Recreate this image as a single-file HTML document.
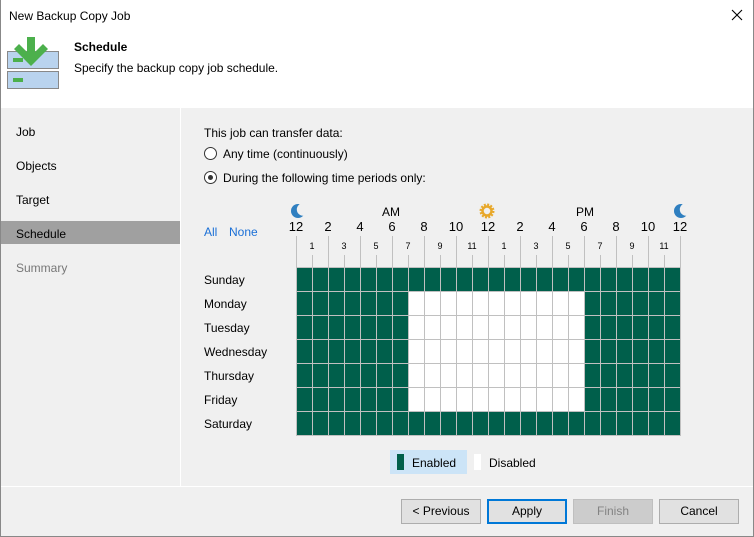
<!DOCTYPE html>
<html><head><style>
*{margin:0;padding:0;box-sizing:border-box}
body{width:754px;height:537px;position:relative;background:#f0f0f0;font-family:"Segoe UI","Liberation Sans",sans-serif;font-size:12px;color:#000;overflow:hidden}
.a{position:absolute;white-space:nowrap}
#win{position:absolute;left:0;top:0;width:754px;height:537px;border:1px solid #888;border-top:none}
.btn{position:absolute;top:499px;height:25px;width:80px;background:#e1e1e1;border:1px solid #adadad;text-align:center;line-height:23px;font-size:12px}
.rad{position:absolute;width:13px;height:13px;border:1px solid #333;border-radius:50%;background:#fff}
</style></head><body>
<div class="a" style="left:0;top:0;width:754px;height:108px;background:#fff"></div>
<div class="a" style="left:9px;top:9px;font-size:12px">New Backup Copy Job</div>
<svg class="a" style="left:731px;top:9px" width="12" height="12"><path d="M1 1L11 11M11 1L1 11" stroke="#000" stroke-width="1.1"/></svg>
<svg class="a" style="left:6px;top:35px" width="54" height="55">
<rect x="1.5" y="16.5" width="51" height="17" fill="#b9d3ee" stroke="#888"/>
<rect x="1.5" y="36.5" width="51" height="17" fill="#b9d3ee" stroke="#888"/>
<rect x="7" y="23" width="10" height="4" fill="#4cb04c"/>
<rect x="7" y="43" width="10" height="4" fill="#4cb04c"/>
<path d="M21 2h8v15l8-8 5 5-17 17-17-17 5-5 8 8z" fill="#4cb04c"/>
</svg>
<div class="a" style="left:74px;top:40px;font-weight:bold">Schedule</div>
<div class="a" style="left:74px;top:61px">Specify the backup copy job schedule.</div>
<div class="a" style="left:180px;top:108px;width:1px;height:378px;background:#fff"></div>
<div class="a" style="left:16px;top:125px">Job</div>
<div class="a" style="left:16px;top:159px">Objects</div>
<div class="a" style="left:16px;top:193px">Target</div>
<div class="a" style="left:1px;top:221px;width:179px;height:23px;background:#a0a0a0"></div>
<div class="a" style="left:16px;top:227px">Schedule</div>
<div class="a" style="left:16px;top:261px;color:#777">Summary</div>
<div class="a" style="left:204px;top:126px">This job can transfer data:</div>
<div class="rad" style="left:204px;top:147px"></div>
<div class="a" style="left:223px;top:147px">Any time (continuously)</div>
<div class="rad" style="left:204px;top:171px"></div>
<div class="a" style="left:208px;top:175px;width:5px;height:5px;border-radius:50%;background:#333"></div>
<div class="a" style="left:223px;top:171px">During the following time periods only:</div>
<div class="a" style="left:204px;top:225px;color:#1a6fd6">All</div>
<div class="a" style="left:229px;top:225px;color:#1a6fd6">None</div>
<div class="a" style="left:382px;top:205px">AM</div>
<div class="a" style="left:576px;top:205px">PM</div>
<svg class="a" style="left:290px;top:203px" width="400" height="16">
<circle cx="8" cy="8" r="7" fill="#2f7fc0"/><circle cx="13" cy="6.5" r="6.2" fill="#f0f0f0"/>
<circle cx="391" cy="8" r="7" fill="#2f7fc0"/><circle cx="396" cy="6.5" r="6.2" fill="#f0f0f0"/>
<circle cx="197" cy="8" r="4.5" fill="none" stroke="#e8a82a" stroke-width="2.5"/>
<circle cx="197" cy="8" r="6.5" fill="none" stroke="#e8a82a" stroke-width="2" stroke-dasharray="2 1.4"/>
</svg>
<div id="hdr"></div>
<div id="grid" class="a" style="left:296px;top:267px;width:385px;height:169px;background:#c0c0c0"></div>
<div class="a" style="left:204px;top:273px">Sunday</div>
<div class="a" style="left:204px;top:297px">Monday</div>
<div class="a" style="left:204px;top:321px">Tuesday</div>
<div class="a" style="left:204px;top:345px">Wednesday</div>
<div class="a" style="left:204px;top:369px">Thursday</div>
<div class="a" style="left:204px;top:393px">Friday</div>
<div class="a" style="left:204px;top:417px">Saturday</div>
<div class="a" style="left:390px;top:450px;width:77px;height:24px;background:#cce4f7"></div>
<div class="a" style="left:397px;top:454px;width:7px;height:16px;background:#005f4b"></div>
<div class="a" style="left:412px;top:456px">Enabled</div>
<div class="a" style="left:474px;top:454px;width:7px;height:16px;background:#fff"></div>
<div class="a" style="left:489px;top:456px">Disabled</div>
<div class="a" style="left:0;top:486px;width:754px;height:1px;background:#fff"></div>
<div class="btn" style="left:401px">&lt; Previous</div>
<div class="btn" style="left:487px;border:2px solid #0078d7;line-height:21px">Apply</div>
<div class="btn" style="left:573px;background:#ccc;border-color:#bfbfbf;color:#838383">Finish</div>
<div class="btn" style="left:659px">Cancel</div>
<div id="win"></div>
<script>
var h='',labs=['12','2','4','6','8','10','12','2','4','6','8','10','12'];
for(var k=0;k<=24;k++){var x=296+16*k;
 if(k%2==0){h+='<div class="a" style="left:'+(x-12)+'px;top:219px;width:24px;text-align:center;font-size:13px">'+labs[k/2]+'</div><div class="a" style="left:'+x+'px;top:236px;width:1px;height:31px;background:#c0c0c0"></div>';}
 else{var n=k>12?k-12:k;h+='<div class="a" style="left:'+(x-10)+'px;top:241px;width:20px;text-align:center;font-size:9px">'+n+'</div><div class="a" style="left:'+x+'px;top:255px;width:1px;height:12px;background:#c0c0c0"></div>';}}
document.getElementById('hdr').innerHTML=h;
var g='';for(var r=0;r<7;r++)for(var c=0;c<24;c++){var dis=r>=1&&r<=5&&c>=7&&c<=17;
g+='<div class="a" style="left:'+(c*16+1)+'px;top:'+(r*24+1)+'px;width:15px;height:23px;background:'+(dis?'#fff':'#005f4b')+'"></div>';}
document.getElementById('grid').innerHTML=g;
</script>
</body></html>
